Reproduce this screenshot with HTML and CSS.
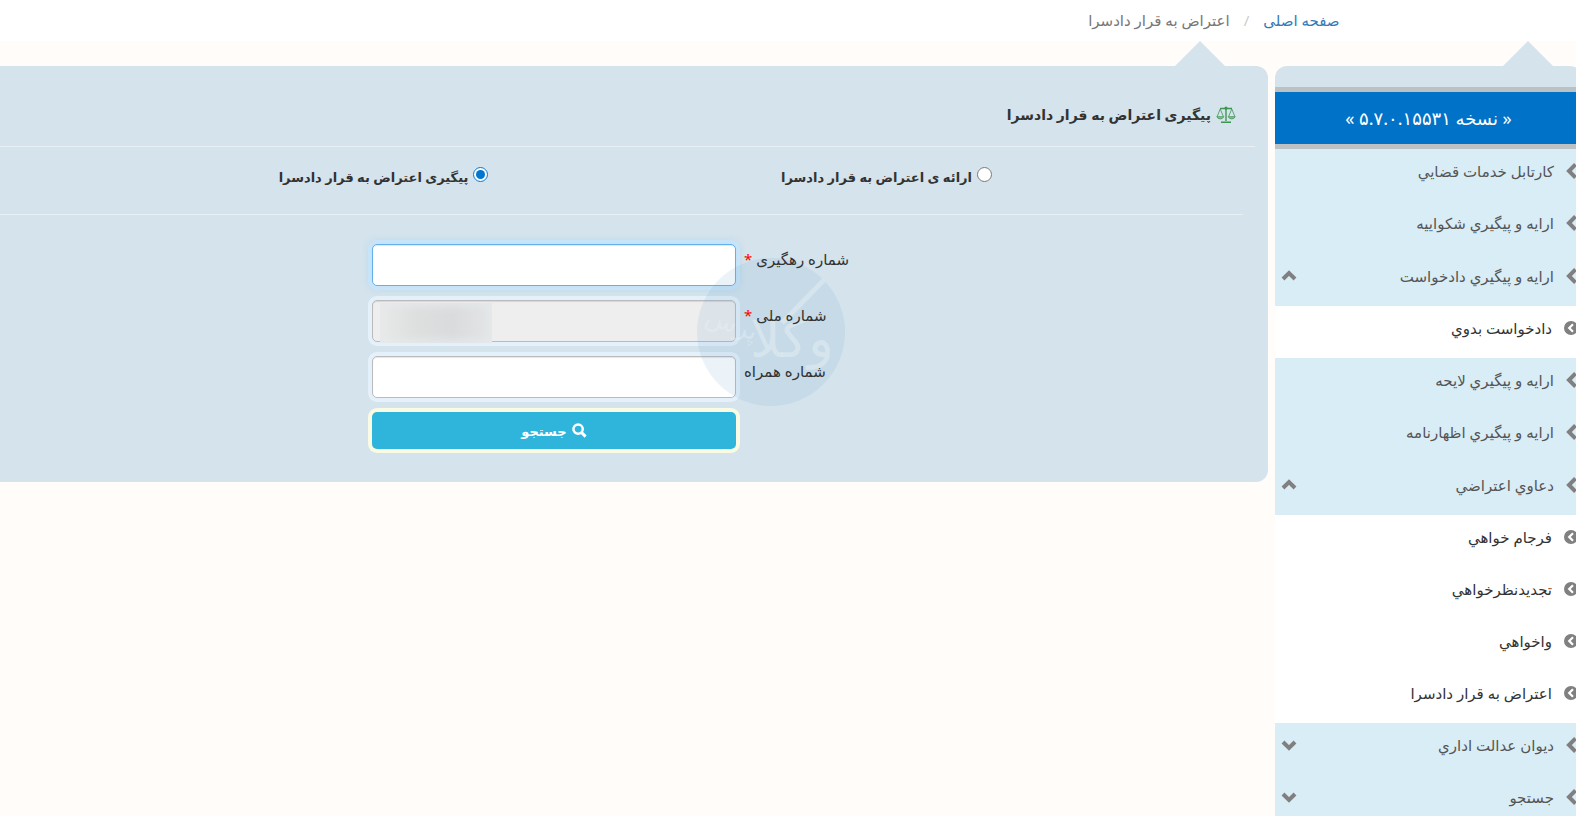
FILE: index.html
```html
<!DOCTYPE html>
<html lang="fa" dir="rtl">
<head>
  <meta charset="utf-8">
  <meta name="viewport" content="width=device-width, initial-scale=1">
  <title>پیگیری اعتراض به قرار دادسرا</title>
  <link rel="stylesheet" href="styles.css">
</head>

<body>
  <svg class="symbols" aria-hidden="true">
    <symbol id="chevron" viewBox="0 0 12 16">
      <path d="M9.5 1.5 3 8l6.500 6.500" fill="none" stroke="currentColor" stroke-width="4"/>
    </symbol>
    <symbol id="circle-chevron" viewBox="0 0 14 14">
      <circle cx="7" cy="7" r="7" fill="currentColor"/>
      <path d="M9 3.200 5.200 7 9 10.800" fill="none" stroke="#fff" stroke-width="2.200"/>
    </symbol>
    <symbol id="caret" viewBox="0 0 16 12">
      <path d="M2 9l6-6 6 6" fill="none" stroke="currentColor" stroke-width="4"/>
    </symbol>
  </svg>

  <nav class="topbar">
    <ol class="breadcrumb">
      <li><a href="#">صفحه اصلی</a></li>
      <li class="active">اعتراض به قرار دادسرا</li>
    </ol>
  </nav>

  <div class="page">
    <aside class="sidebar">
      <h2 class="version">« نسخه ۵.۷.۰.۱۵۵۳۱ »</h2>
      <ul class="menu">
        <li><a href="#"><svg class="bullet"><use href="#chevron"/></svg>كارتابل خدمات قضايي</a></li>
        <li><a href="#"><svg class="bullet"><use href="#chevron"/></svg>ارايه و پيگيري شكواييه</a></li>
        <li class="open">
          <a href="#"><svg class="bullet"><use href="#chevron"/></svg>ارايه و پيگيري دادخواست<svg class="toggle"><use href="#caret"/></svg></a>
          <ul class="submenu">
            <li><a href="#"><svg class="dot"><use href="#circle-chevron"/></svg>دادخواست بدوي</a></li>
          </ul>
        </li>
        <li><a href="#"><svg class="bullet"><use href="#chevron"/></svg>ارايه و پيگيري لايحه</a></li>
        <li><a href="#"><svg class="bullet"><use href="#chevron"/></svg>ارايه و پيگيري اظهارنامه</a></li>
        <li class="open">
          <a href="#"><svg class="bullet"><use href="#chevron"/></svg>دعاوي اعتراضي<svg class="toggle"><use href="#caret"/></svg></a>
          <ul class="submenu">
            <li><a href="#"><svg class="dot"><use href="#circle-chevron"/></svg>فرجام خواهي</a></li>
            <li><a href="#"><svg class="dot"><use href="#circle-chevron"/></svg>تجديدنظرخواهي</a></li>
            <li><a href="#"><svg class="dot"><use href="#circle-chevron"/></svg>واخواهي</a></li>
            <li><a href="#"><svg class="dot"><use href="#circle-chevron"/></svg>اعتراض به قرار دادسرا</a></li>
          </ul>
        </li>
        <li><a href="#"><svg class="bullet"><use href="#chevron"/></svg>ديوان عدالت اداري<svg class="toggle down"><use href="#caret"/></svg></a></li>
        <li><a href="#"><svg class="bullet"><use href="#chevron"/></svg>جستجو<svg class="toggle down"><use href="#caret"/></svg></a></li>
      </ul>
    </aside>

    <main class="panel">
      <h1 class="title">
        <svg class="scales" viewBox="0 0 20 18" fill="none" stroke="#3f9650">
          <path d="M4 2.500h12M10 1v14M5 16.300h10" stroke-width="1.400"/>
          <circle cx="10" cy="2.200" r="1.200" fill="#3f9650"/>
          <path d="M4.200 3 1.200 10.500M4.200 3l3.200 7.500M15.800 3l-3.200 7.500M15.800 3l3 7.500" stroke-width=".8"/>
          <path d="M.8 10.700h7q-1 2.200-3.500 2.200T.8 10.700zM12.200 10.700h7q-1 2.200-3.500 2.200t-3.500-2.200z" fill="#8dc096" stroke-width=".8"/>
        </svg>
        پیگیری اعتراض به قرار دادسرا
      </h1>

      <form class="form">
        <div class="choices">
          <label><input type="radio" name="mode"> ارائه ی اعتراض به قرار دادسرا</label>
          <label><input type="radio" name="mode" checked> پیگیری اعتراض به قرار دادسرا</label>
        </div>

        <div class="fields">
          <div class="field">
            <label for="tracking">شماره رهگیری <span class="required">*</span></label>
            <input type="text" id="tracking" class="focused">
          </div>
          <div class="field">
            <label for="national">شماره ملی <span class="required">*</span></label>
            <div class="masked">
              <input type="text" id="national" readonly>
              <span class="mask"></span>
            </div>
          </div>
          <div class="field">
            <label for="mobile">شماره همراه</label>
            <input type="text" id="mobile">
          </div>
          <div class="field">
            <button type="button" class="search">
              <svg viewBox="0 0 16 16" fill="none" stroke="currentColor"><circle cx="6.500" cy="6.500" r="5" stroke-width="2.600"/><path d="M10 10l4.500 4.500" stroke-width="3.200"/></svg>
              جستجو
            </button>
          </div>
          <svg class="watermark" viewBox="0 0 150 150" aria-hidden="true">
            <circle cx="75" cy="75" r="74"/>
            <path d="M128 23 86 66"/>
            <text x="138" y="100" font-size="54">وکلا</text>
            <text x="58" y="84" font-size="26" transform="rotate(20 58 84)">پرس</text>
          </svg>
        </div>
      </form>
    </main>
  </div>
</body>
</html>
```
FILE: styles.css
```css
* {
  box-sizing: border-box;
}

body {
  margin: 0;
  background: #fffcf9;
  color: #333;
  font-family: "Noto Sans", "DejaVu Sans", sans-serif;
  font-size: 15px;
  line-height: 24px;
  overflow-x: hidden;
}

a {
  text-decoration: none;
}

ul,
ol {
  list-style: none;
  margin: 0;
  padding: 0;
}

.symbols {
  display: none;
}

.topbar {
  background: #fff;
  padding: 8px 15% 9px;
}

.breadcrumb {
  display: flex;
}

.breadcrumb a {
  color: #337ab7;
}

.breadcrumb .active {
  color: #777;
}

.breadcrumb .active::before {
  content: "/";
  color: #ccc;
  padding: 0 14px;
}

.page {
  display: flex;
  align-items: flex-start;
  gap: 7px;
  margin-top: 25px;
  margin-right: -6px;
}

/* sidebar */
.sidebar {
  position: relative;
  flex: none;
  width: 307px;
  padding-top: 21px;
  background: #d4e3ec;
  border-radius: 12px 12px 0 0;
}

.sidebar::before,
.panel::before {
  content: "";
  position: absolute;
  bottom: 100%;
  border: 25px solid transparent;
  border-top: 0;
  border-bottom-color: #d4e3ec;
}

.sidebar::before {
  right: 29px;
}

.panel::before {
  right: 43px;
}

.version {
  margin: 0;
  border: 5px solid #bcc1c4;
  border-width: 5px 0;
  background: #0072c8;
  color: #fff;
  font-size: 18px;
  font-weight: normal;
  line-height: 52px;
  text-align: center;
}

.menu {
  background: #d9edf7;
}

.menu a {
  display: flex;
  align-items: center;
  height: 52px;
  padding: 0 4px 8px 6px;
  color: #555;
}

.menu .open > a {
  height: 53px;
}

.menu .submenu {
  background: #fff;
}

.menu .submenu a {
  color: #333;
}

.bullet,
.dot {
  flex: none;
  width: 12px;
  height: 16px;
  margin-left: 12px;
  color: #808080;
}

.dot {
  width: 14px;
  height: 14px;
}

.toggle {
  width: 16px;
  height: 12px;
  margin-right: auto;
  color: #808080;
}

.down {
  transform: scaleY(-1);
}

/* main panel */
.panel {
  position: relative;
  flex: 1;
  min-width: 0;
  padding: 34px 0 33px;
  background: #d4e3ec;
  border-radius: 0 12px 12px 0;
}

.title {
  display: flex;
  align-items: center;
  gap: 5px;
  margin: 0 13px 0 0;
  padding: 0 19px 16px 0;
  border-bottom: 1px solid #e9eff3;
  font-size: 14px;
  line-height: 30px;
}

.scales {
  width: 20px;
  height: 18px;
}

.choices {
  display: grid;
  grid-template-columns: 1fr 1fr;
  margin-right: 25px;
  padding: 18px 105px 25px 132px;
  border-bottom: 1px solid #e9eff3;
  font-size: 13px;
  font-weight: bold;
}

.choices label {
  display: flex;
  justify-content: center;
  gap: 5px;
}

.choices input {
  width: 15px;
  height: 15px;
  margin: 2px 0 0;
  accent-color: #0075d1;
}

.fields {
  position: relative;
  display: grid;
  gap: 14px;
  padding-top: 29px;
}

.field {
  display: grid;
  grid-template-columns: 532fr 364fr 372fr;
}

.field label {
  position: relative;
  z-index: 1;
  padding: 3px 0 0 8px;
  text-align: left;
}

.required {
  color: #f00;
}

.field input {
  width: 100%;
  height: 42px;
  padding: 6px 12px;
  border: 1px solid #bbb;
  border-radius: 5px;
  box-shadow: inset 0 1px 1px rgba(0, 0, 0, 0.1), 0 0 0 4px #e4f1fb;
}

.field input.focused {
  border-color: #66afe9;
  box-shadow: inset 0 1px 1px rgba(0, 0, 0, 0.1), 0 0 0 4px rgba(200, 230, 252, 0.8), 0 0 8px rgba(102, 175, 233, 0.6);
}

.field input[readonly] {
  background: #eee;
}

.masked {
  position: relative;
}

.mask {
  position: absolute;
  left: 8px;
  top: 3px;
  width: 112px;
  height: 40px;
  background: linear-gradient(90deg, #e9e9e9, #dedfdf 30%, #d9dbdc 65%, #e3e5e6);
  box-shadow: inset 0 0 8px 3px #e6e9eb;
}

.search {
  grid-column: 2;
  display: flex;
  align-items: center;
  justify-content: center;
  gap: 5px;
  height: 37px;
  border: 0;
  border-radius: 5px;
  background: #2fb4dc;
  box-shadow: 0 0 0 4px #f9fbe2;
  color: #fff;
  font: bold 13px/24px "Noto Sans", "DejaVu Sans", sans-serif;
}

.search svg {
  width: 15px;
  height: 15px;
}

.watermark {
  position: absolute;
  top: 42px;
  right: calc(45% - 149px);
  width: 150px;
  height: 150px;
  pointer-events: none;
}

.watermark circle {
  fill: rgba(95, 155, 195, 0.12);
}

.watermark path {
  stroke: rgba(230, 240, 245, 0.45);
  stroke-width: 5;
}

.watermark text {
  fill: rgba(230, 240, 245, 0.45);
  font-family: "DejaVu Sans", sans-serif;
}
```
